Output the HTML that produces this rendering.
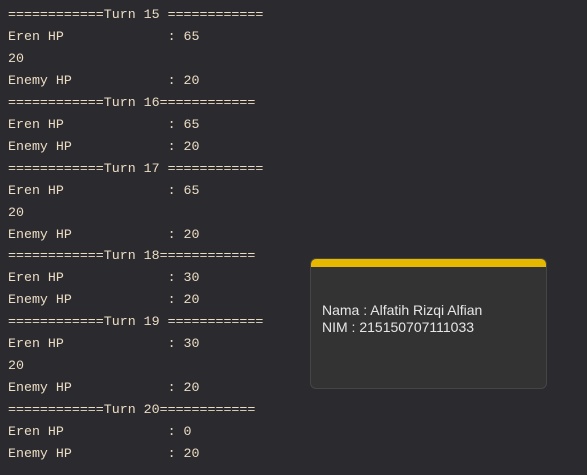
<!DOCTYPE html>
<html><head><style>
html,body{margin:0;padding:0;width:587px;height:475px;overflow:hidden;background:#2b2a2e;}
.t{position:absolute;left:8px;top:4px;font-family:"Liberation Mono",monospace;font-size:13.3px;line-height:21.95px;color:#ebdcc4;white-space:pre;}
.p{position:absolute;left:310px;top:258px;width:235px;height:129px;background:#333333;border:1px solid #454545;border-radius:6px;overflow:hidden;}
.bar{height:8px;background:#e6b800;}
.pt{position:absolute;left:11px;top:43px;font-family:"Liberation Sans",sans-serif;font-size:14px;line-height:17px;color:#e6e6e6;}
</style></head><body>
<div class="t">============Turn 15 ============
Eren HP             : 65
20
Enemy HP            : 20
============Turn 16============
Eren HP             : 65
Enemy HP            : 20
============Turn 17 ============
Eren HP             : 65
20
Enemy HP            : 20
============Turn 18============
Eren HP             : 30
Enemy HP            : 20
============Turn 19 ============
Eren HP             : 30
20
Enemy HP            : 20
============Turn 20============
Eren HP             : 0
Enemy HP            : 20</div>
<div class="p"><div class="bar"></div><div class="pt">Nama : Alfatih Rizqi Alfian<br>NIM : 215150707111033</div></div>
</body></html>
